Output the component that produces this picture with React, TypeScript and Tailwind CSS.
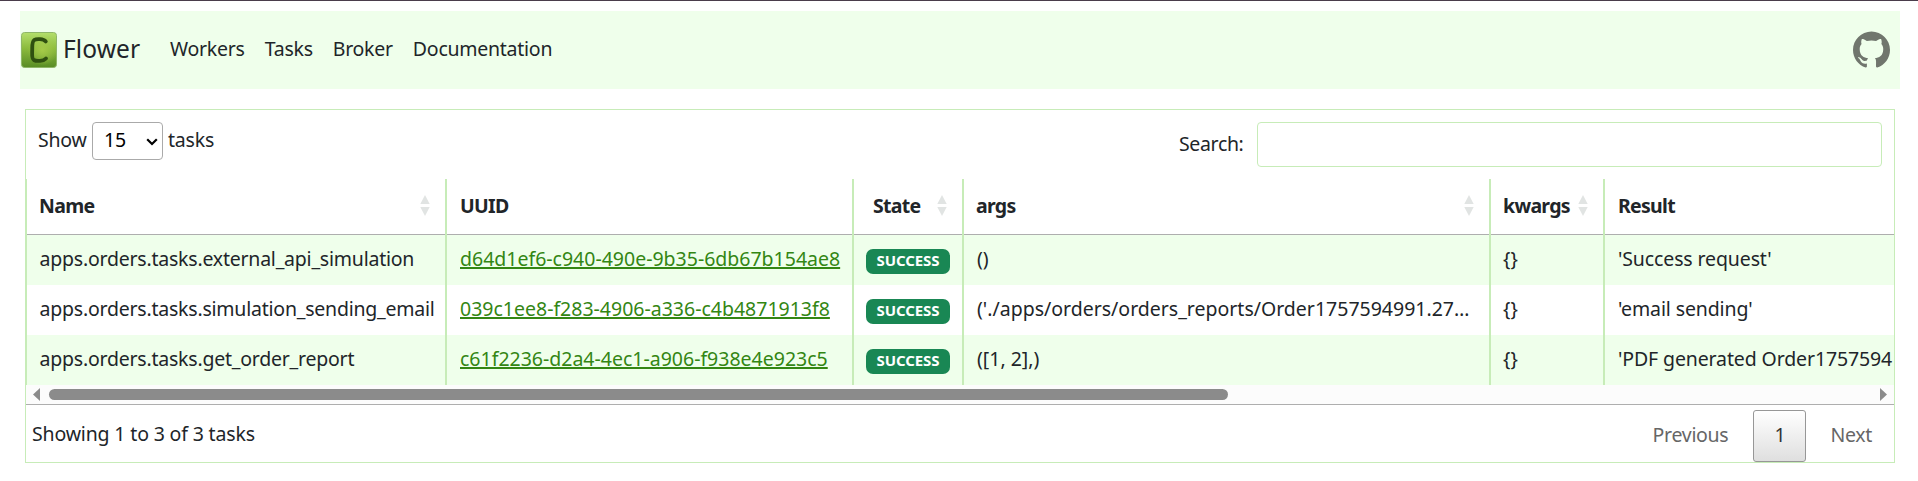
import type { ReactNode } from "react";
import { SiGithub } from "react-icons/si";

type Task = {
  name: string;
  uuid: string;
  state: string;
  args: string;
  kwargs: string;
  result: string;
};

const tasks: Task[] = [
  {
    name: "apps.orders.tasks.external_api_simulation",
    uuid: "d64d1ef6-c940-490e-9b35-6db67b154ae8",
    state: "SUCCESS",
    args: "()",
    kwargs: "{}",
    result: "'Success request'",
  },
  {
    name: "apps.orders.tasks.simulation_sending_email",
    uuid: "039c1ee8-f283-4906-a336-c4b4871913f8",
    state: "SUCCESS",
    args: "('./apps/orders/orders_reports/Order1757594991.27…",
    kwargs: "{}",
    result: "'email sending'",
  },
  {
    name: "apps.orders.tasks.get_order_report",
    uuid: "c61f2236-d2a4-4ec1-a906-f938e4e923c5",
    state: "SUCCESS",
    args: "([1, 2],)",
    kwargs: "{}",
    result: "'PDF generated Order1757594",
  },
];

const columns = "grid grid-cols-[420px_407px_110px_527px_114px_290px]";

function Logo() {
  return (
    <svg viewBox="0 0 36 36" className="mb-px size-9">
      <defs>
        <linearGradient id="tile" x1="0" y1="0" x2="0" y2="1">
          <stop offset="0" stopColor="#b4df6c" />
          <stop offset="0.45" stopColor="#8bbb3d" />
          <stop offset="1" stopColor="#588c25" />
        </linearGradient>
        <radialGradient id="glow" cx="0.6" cy="0.5" r="0.45">
          <stop offset="0" stopColor="#a8cc4a" stopOpacity="0.9" />
          <stop offset="1" stopColor="#a8cc4a" stopOpacity="0" />
        </radialGradient>
      </defs>
      <rect x="0.5" y="0.5" width="35" height="35" rx="3" fill="url(#tile)" stroke="#8fb768" strokeWidth="1" />
      <rect x="1" y="1" width="34" height="34" rx="3" fill="url(#glow)" />
      <path
        d="M24.8 9.4 C22.5 6.8 15.5 6.6 13 8.2 C11 9.6 11.3 13 11.2 18 C11.1 23 10.6 26.6 12.8 28 C15.6 29.6 22.5 29.2 25 26.4"
        fill="none"
        stroke="#2f5010"
        strokeWidth="3.8"
        strokeLinecap="round"
      />
    </svg>
  );
}

function SortArrows() {
  return (
    <svg viewBox="0 0 10 21" className="h-[21px] w-2.5 shrink-0 fill-[#e1e4e3]">
      <path d="M0.3 9 L5 0 L9.7 9 Z" />
      <path d="M0.3 12 L5 21 L9.7 12 Z" />
    </svg>
  );
}

function HeadCell({ children, sort, pad }: { children: ReactNode; sort?: boolean; pad: string }) {
  return (
    <div className="border-x border-[#c7ecb8] last:border-r-0">
      <div className={`flex h-14 items-center justify-between border-b border-[#aeaeae] font-bold ${pad}`}>
        <span>{children}</span>
        {sort && <SortArrows />}
      </div>
    </div>
  );
}

function Cell({ children }: { children: ReactNode }) {
  return (
    <div className="flex h-[50px] items-center border-x border-[#c7ecb8] pb-[3px] pl-3 whitespace-nowrap last:border-r-0">
      {children}
    </div>
  );
}

export default function App() {
  return (
    <div className="h-[481px] w-full overflow-hidden border-t border-[#4a3c4b] bg-white px-5 pt-2.5 font-['Noto_Sans',sans-serif] text-[19.5px] leading-[30px] text-[#212529]">
      <nav className="mr-[-2px] flex h-[78px] items-center bg-[#efffeb] pr-2.5 pl-px">
        <Logo />
        <span className="mb-0.5 ml-1.5 w-[107px] text-[24.5px] tracking-[0.1px]">Flower</span>
        <div className="mb-0.5 flex gap-5 tracking-[-0.25px]">
          <a>Workers</a>
          <a>Tasks</a>
          <a>Broker</a>
          <a>Documentation</a>
        </div>
        <SiGithub className="mb-px ml-auto size-[37px] text-[#70766d]" />
      </nav>

      <main className="mt-5 mr-[3px] ml-[5px] h-[354px] border border-[#c7ecb8]">
        <div className="flex h-[69px] items-start justify-between pt-3 pr-3 pl-3">
          <div className="flex items-center tracking-[-0.2px]">
            <span className="mb-0.5 w-[54px]">Show</span>
            <div className="flex h-[38px] w-[71px] items-center justify-between rounded border border-[#aaa] pr-1 pl-[11px] text-black">
              <span className="mb-0.5">15</span>
              <svg viewBox="0 0 12 8" className="mt-0.5 h-2 w-3">
                <path d="M1.2 1.2 L6 6 L10.8 1.2" fill="none" stroke="#000" strokeWidth="2.2" />
              </svg>
            </div>
            <span className="mb-0.5 ml-[5px]">tasks</span>
          </div>
          <div className="flex items-center">
            <span className="mb-0.5 w-[78px] tracking-[-0.35px]">Search:</span>
            <div className="h-[45px] w-[625px] rounded border border-[#c7ecb8] bg-white" />
          </div>
        </div>

        <div className={`${columns} tracking-[-0.7px]`}>
          <HeadCell sort pad="pb-0.5 pl-3 pr-[15px]">Name</HeadCell>
          <HeadCell pad="pb-0.5 pl-[13px]">UUID</HeadCell>
          <HeadCell sort pad="pb-0.5 pl-[19px] pr-[15px]">State</HeadCell>
          <HeadCell sort pad="pb-0.5 pl-3 pr-[15px]">args</HeadCell>
          <HeadCell sort pad="pb-0.5 pl-3 pr-[15px]">kwargs</HeadCell>
          <HeadCell pad="pb-0.5 pl-[13px]">Result</HeadCell>
        </div>

        {tasks.map((task) => (
          <div key={task.uuid} className={`${columns} even:bg-white odd:bg-[#efffeb]`}>
            <Cell>
              <span className="ml-[0.5px] tracking-[-0.22px]">{task.name}</span>
            </Cell>
            <Cell>
              <a className="ml-px text-[#338613] underline decoration-2 underline-offset-[1px]">{task.uuid}</a>
            </Cell>
            <Cell>
              <span className="mt-[5px] flex h-[25px] w-[84px] items-center justify-center rounded-[7px] bg-[#198754] text-[15px] leading-none font-bold tracking-[-0.1px] text-white">
                <span className="mb-0.5">{task.state}</span>
              </span>
            </Cell>
            <Cell>
              <span className="ml-px">{task.args}</span>
            </Cell>
            <Cell>
              <span>{task.kwargs}</span>
            </Cell>
            <Cell>
              <span className="ml-px tracking-[-0.2px] last-of-type:tracking-[-0.12px]">{task.result}</span>
            </Cell>
          </div>
        ))}

        <div className="flex h-5 items-center justify-between border-b border-[#aeaeae] bg-[#fcfcfc] fill-[#8b8b8b] px-[7px]">
          <svg viewBox="0 0 7 13" className="h-[13px] w-[7px]">
            <path d="M7 0 V13 L0 6.5 Z" />
          </svg>
          <div className="mr-auto ml-[9px] h-[11px] w-[1179px] rounded-full bg-[#8b8b8b]" />
          <svg viewBox="0 0 7 13" className="h-[13px] w-[7px]">
            <path d="M0 0 V13 L7 6.5 Z" />
          </svg>
        </div>

        <div className="flex h-[57px] items-center justify-between pr-[21px] pl-1.5">
          <span className="tracking-[-0.16px]">Showing 1 to 3 of 3 tasks</span>
          <div className="flex items-center pt-[5px] tracking-[-0.3px] text-[#666]">
            <span className="mb-[3px]">Previous</span>
            <span className="mr-6 ml-[25px] flex h-[52px] w-[53px] items-center justify-center rounded-[3px] border border-[#979797] bg-linear-to-b from-white to-[#dfdfdf] pb-[3px] text-[#333]">
              1
            </span>
            <span className="mr-px mb-[3px]">Next</span>
          </div>
        </div>
      </main>
    </div>
  );
}
